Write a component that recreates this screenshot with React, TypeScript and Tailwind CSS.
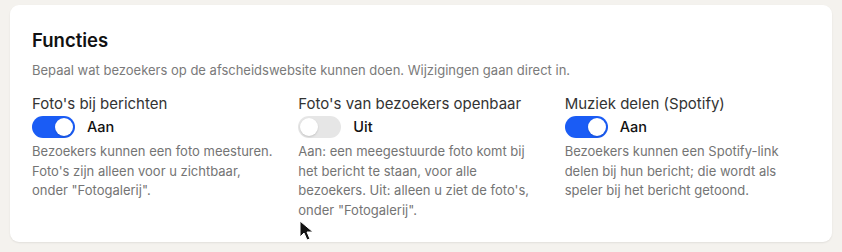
import React from "react";

type Feature = {
  label: string;
  on: boolean;
  description: string;
};

const features: Feature[] = [
  {
    label: "Foto's bij berichten",
    on: true,
    description:
      'Bezoekers kunnen een foto meesturen. Foto\'s zijn alleen voor u zichtbaar, onder "Fotogalerij".',
  },
  {
    label: "Foto's van bezoekers openbaar",
    on: false,
    description:
      'Aan: een meegestuurde foto komt bij het bericht te staan, voor alle bezoekers. Uit: alleen u ziet de foto\'s, onder "Fotogalerij".',
  },
  {
    label: "Muziek delen (Spotify)",
    on: true,
    description:
      "Bezoekers kunnen een Spotify-link delen bij hun bericht; die wordt als speler bij het bericht getoond.",
  },
];

function Toggle({ on }: { on: boolean }) {
  return (
    <span
      className={
        on
          ? "flex h-[22px] w-[43px] items-center justify-end rounded-full bg-[#1a5cf5] p-[2px]"
          : "flex h-[22px] w-[43px] items-center justify-start rounded-full bg-[#e6e6e6] p-[2px]"
      }
    >
      <span className="h-[18px] w-[18px] rounded-full bg-white shadow-[0_1px_2px_rgba(0,0,0,0.15)]" />
    </span>
  );
}

function Cursor() {
  return (
    <svg
      className="pointer-events-none absolute left-[299px] top-[220px]"
      width="16"
      height="22"
      viewBox="0 0 16 22"
    >
      <path
        d="M1 1 L1 17 L5 13 L8 20 L11 19 L8 12 L14 12 Z"
        fill="#111"
        stroke="#fff"
        strokeWidth="1"
        strokeLinejoin="round"
      />
    </svg>
  );
}

export default function App() {
  return (
    <div
      className="relative h-[252px] w-[842px] bg-[#f4f2ee] px-[10px] pt-[5px]"
      style={{ fontFamily: "Inter, 'Noto Sans', sans-serif" }}
    >
      <div className="h-[237px] rounded-[9px] bg-white px-[22px] pt-[24px] shadow-[0_1px_2px_rgba(0,0,0,0.08)]">
        <h2 className="text-[18.5px] font-semibold leading-[22px] text-[#111]">
          Functies
        </h2>
        <p className="mt-[11px] text-[13px] leading-[16px] text-[#7a7a7a]">
          Bepaal wat bezoekers op de afscheidswebsite kunnen doen. Wijzigingen gaan direct in.
        </p>
        <div className="mt-[17px] grid grid-cols-3 gap-x-[21px]">
          {features.map((f) => (
            <div key={f.label} className="flex flex-col">
              <span className="text-[15px] leading-[18px] text-[#333]">{f.label}</span>
              <div className="mt-[3px] flex items-center gap-[12px]">
                <Toggle on={f.on} />
                <span className="text-[14.5px] font-medium leading-[18px] text-[#111]">
                  {f.on ? "Aan" : "Uit"}
                </span>
              </div>
              <p className="mt-[4px] text-[13px] leading-[19.5px] text-[#747474]">
                {f.description}
              </p>
            </div>
          ))}
        </div>
      </div>
      <Cursor />
    </div>
  );
}
